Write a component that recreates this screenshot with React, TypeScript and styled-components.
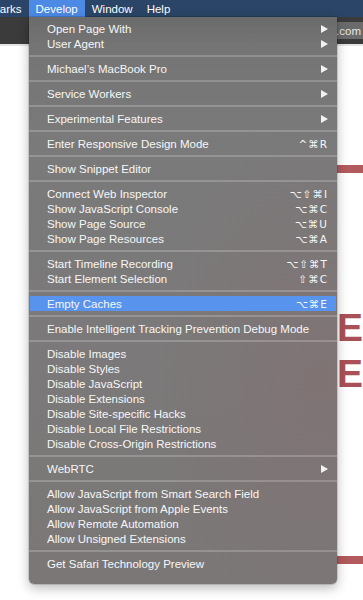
import React from "react";
import styled, { createGlobalStyle } from "styled-components";

const GlobalStyle = createGlobalStyle`
  html, body {
    margin: 0;
    padding: 0;
    background: #ffffff;
  }
  body {
    font-family: "Liberation Sans", Arial, sans-serif;
  }
`;

const Screen = styled.div`
  position: relative;
  width: 363px;
  height: 600px;
  overflow: hidden;
  background: #ffffff;
`;

const MenuBar = styled.div`
  display: flex;
  align-items: stretch;
  height: 17px;
  background: #2a4567;
  color: #ffffff;
  font-size: 11.5px;
  margin-left: -43px;
`;

const BarItem = styled.div<{ $active?: boolean }>`
  display: flex;
  align-items: center;
  padding: 0 7px;
  background: ${(p) => (p.$active ? "#4c8ae6" : "transparent")};
`;

const Toolbar = styled.div`
  display: flex;
  justify-content: flex-end;
  align-items: center;
  height: 27px;
  background: #3b3b3b;
  border-bottom: 2px solid #e4e4e4;
`;

const UrlField = styled.div`
  width: 120px;
  height: 17px;
  margin-right: -4px;
  border-radius: 4px;
  background: #6b6b6b;
  color: #e6e6e6;
  font-size: 11.5px;
  display: flex;
  align-items: center;
  justify-content: flex-end;
  padding-right: 6px;
  overflow: hidden;
`;

const Page = styled.div`
  display: flex;
  flex-direction: column;
  padding-left: 337px;
`;

const RedBar = styled.div<{ $top: number }>`
  margin-top: ${(p) => p.$top}px;
  height: 8px;
  width: 60px;
  background: #b35a5e;
`;

const Headline = styled.div<{ $top: number }>`
  margin-top: ${(p) => p.$top}px;
  font-family: "Liberation Sans", Arial, sans-serif;
  font-weight: 700;
  font-size: 39px;
  line-height: 40px;
  color: #aa5157;
  white-space: nowrap;
`;

const Menu = styled.div`
  position: absolute;
  left: 29px;
  top: 17px;
  width: 308px;
  padding: 4px 0 13px;
  box-sizing: border-box;
  border-radius: 0 0 5px 5px;
  background:
    radial-gradient(ellipse 160px 260px at 290px 360px, rgba(150, 90, 95, 0.16), rgba(150, 90, 95, 0) 100%),
    linear-gradient(180deg, #6b6b6b 0px, #747474 28px, #7a7a7a 120px, #7b7979 320px, #7b7777 100%);
  box-shadow: 0 4px 12px rgba(0, 0, 0, 0.28), 0 0 0 0.5px rgba(0, 0, 0, 0.25);
  color: #f7f7f7;
  font-size: 11.5px;
`;

const Item = styled.div<{ $active?: boolean }>`
  display: flex;
  align-items: center;
  justify-content: space-between;
  height: 15px;
  padding: 0 8px 0 17px;
  margin: 0 1px;
  background: ${(p) => (p.$active ? "#5894ee" : "transparent")};
`;

const Label = styled.span`
  white-space: nowrap;
`;

const Shortcut = styled.span`
  font-family: "DejaVu Sans", sans-serif;
  font-size: 10.5px;
  letter-spacing: 1px;
  white-space: nowrap;
`;

const Separator = styled.div`
  height: 10px;
  display: flex;
  align-items: center;
  &::after {
    content: "";
    flex: 1;
    height: 2px;
    background: rgba(255, 255, 255, 0.2);
  }
`;

const Arrow = () => (
  <svg width="7" height="8" viewBox="0 0 7 8">
    <polygon points="0,0 7,4 0,8" fill="#f2f2f2" />
  </svg>
);

type Entry = { label: string; key?: string; sub?: boolean; active?: boolean } | "sep";

const entries: Entry[] = [
  { label: "Open Page With", sub: true },
  { label: "User Agent", sub: true },
  "sep",
  { label: "Michael\u2019s MacBook Pro", sub: true },
  "sep",
  { label: "Service Workers", sub: true },
  "sep",
  { label: "Experimental Features", sub: true },
  "sep",
  { label: "Enter Responsive Design Mode", key: "^\u2318R" },
  "sep",
  { label: "Show Snippet Editor" },
  "sep",
  { label: "Connect Web Inspector", key: "\u2325\u21e7\u2318I" },
  { label: "Show JavaScript Console", key: "\u2325\u2318C" },
  { label: "Show Page Source", key: "\u2325\u2318U" },
  { label: "Show Page Resources", key: "\u2325\u2318A" },
  "sep",
  { label: "Start Timeline Recording", key: "\u2325\u21e7\u2318T" },
  { label: "Start Element Selection", key: "\u21e7\u2318C" },
  "sep",
  { label: "Empty Caches", key: "\u2325\u2318E", active: true },
  "sep",
  { label: "Enable Intelligent Tracking Prevention Debug Mode" },
  "sep",
  { label: "Disable Images" },
  { label: "Disable Styles" },
  { label: "Disable JavaScript" },
  { label: "Disable Extensions" },
  { label: "Disable Site-specific Hacks" },
  { label: "Disable Local File Restrictions" },
  { label: "Disable Cross-Origin Restrictions" },
  "sep",
  { label: "WebRTC", sub: true },
  "sep",
  { label: "Allow JavaScript from Smart Search Field" },
  { label: "Allow JavaScript from Apple Events" },
  { label: "Allow Remote Automation" },
  { label: "Allow Unsigned Extensions" },
  "sep",
  { label: "Get Safari Technology Preview" },
];

export default function App() {
  return (
    <Screen>
      <GlobalStyle />
      <MenuBar>
        <BarItem>Bookmarks</BarItem>
        <BarItem $active>Develop</BarItem>
        <BarItem>Window</BarItem>
        <BarItem>Help</BarItem>
      </MenuBar>
      <Toolbar>
        <UrlField>macbo.com</UrlField>
      </Toolbar>
      <Page>
        <RedBar $top={119} />
        <Headline $top={135}>EN</Headline>
        <Headline $top={6}>E</Headline>
        <RedBar $top={162} />
      </Page>
      <Menu>
        {entries.map((e, i) =>
          e === "sep" ? (
            <Separator key={i} />
          ) : (
            <Item key={i} $active={e.active}>
              <Label>{e.label}</Label>
              {e.key && <Shortcut>{e.key}</Shortcut>}
              {e.sub && <Arrow />}
            </Item>
          )
        )}
      </Menu>
    </Screen>
  );
}
